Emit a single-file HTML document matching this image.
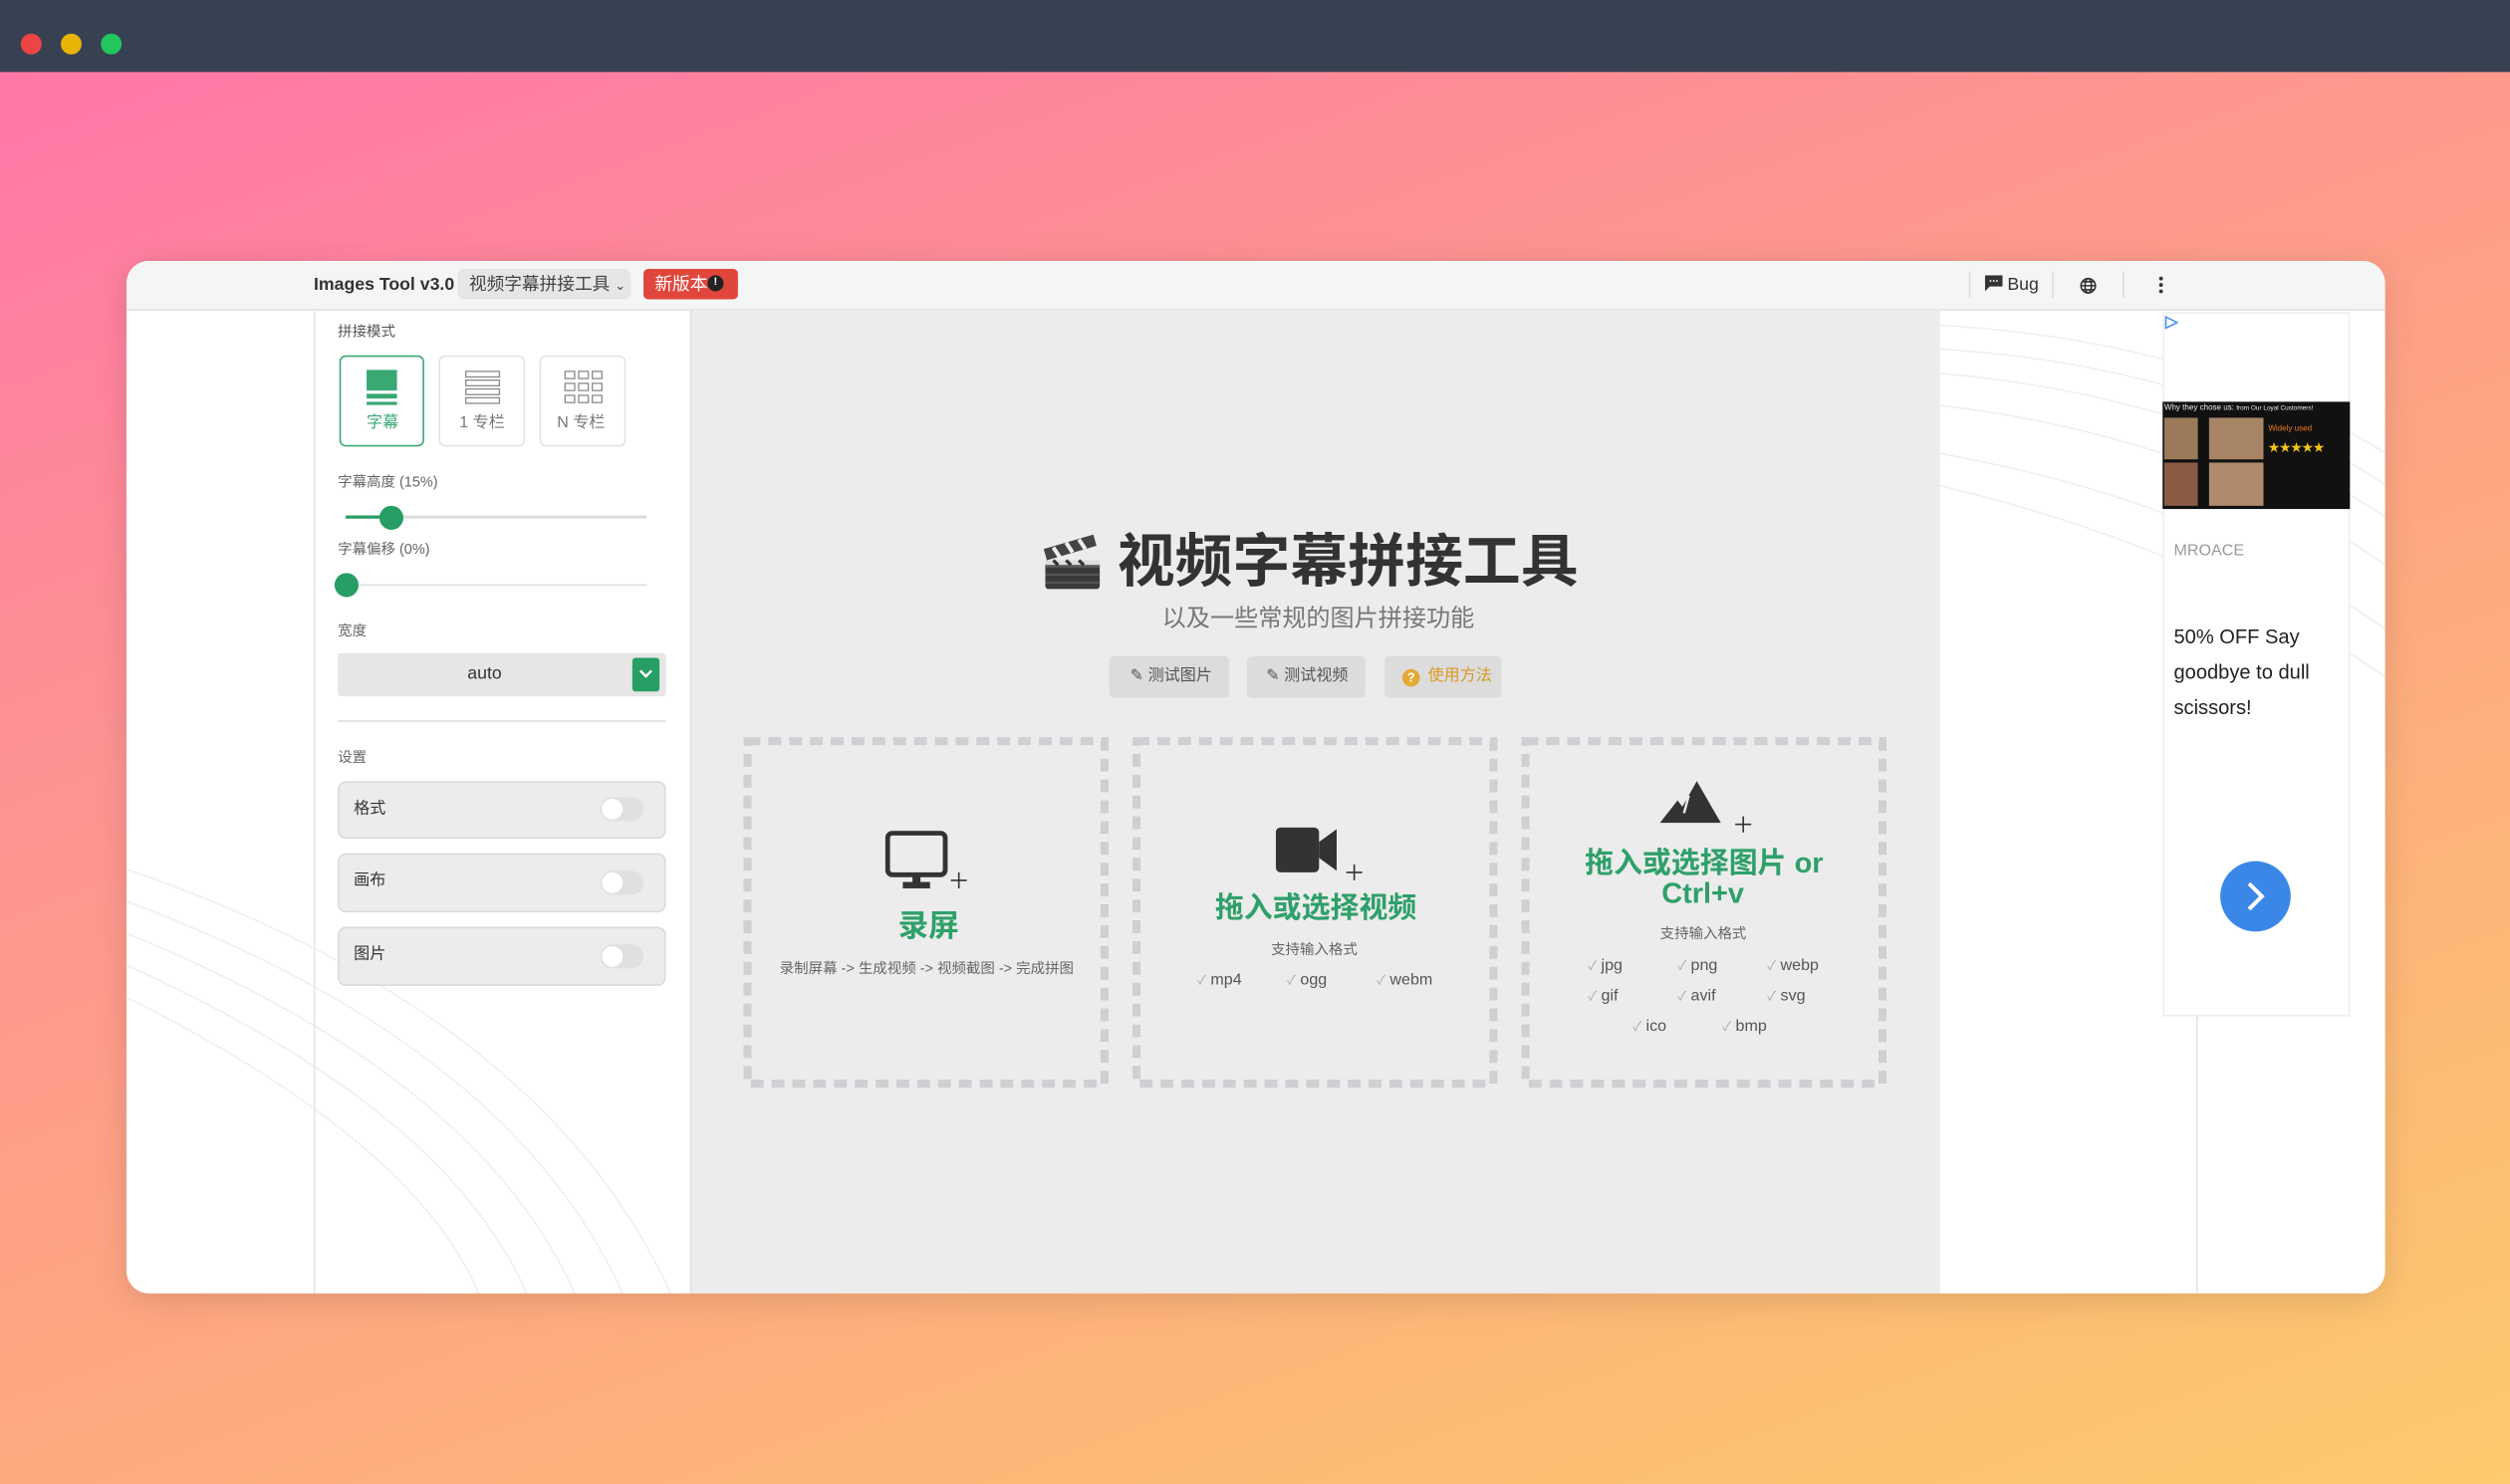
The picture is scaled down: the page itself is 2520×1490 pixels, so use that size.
<!DOCTYPE html>
<html><head><meta charset="utf-8"><style>
html,body{margin:0;padding:0;width:2520px;height:1490px;overflow:hidden}
body{background:linear-gradient(160deg,#ff74a9 0%,#fe9490 35%,#fdad7d 65%,#fdca6c 100%);font-family:"Liberation Sans","Noto Sans CJK SC",sans-serif}
#s{position:absolute;left:0;top:0;width:1568px;height:927px;transform:scale(1.60714);transform-origin:0 0}
.a{position:absolute}
.t{position:absolute;white-space:nowrap;line-height:1.2}
</style></head><body><div id="s">
<div class="a" style="left:0;top:0;width:1568px;height:45px;background:#374151"></div>
<div class="a" style="left:13px;top:21px;width:13px;height:13px;border-radius:50%;background:#ef4444"></div>
<div class="a" style="left:38px;top:21px;width:13px;height:13px;border-radius:50%;background:#eab308"></div>
<div class="a" style="left:63px;top:21px;width:13px;height:13px;border-radius:50%;background:#22c55e"></div>

<div class="a" style="left:79px;top:163px;width:1411px;height:645px;border-radius:14px;background:#fff;overflow:hidden;box-shadow:0 4px 20px rgba(0,0,0,.12)">
 <svg class="a" style="left:0;top:0" width="1411" height="645" fill="none" stroke="#efefef" stroke-width="1">
  <path d="M0 380 Q260 470 340 645"/><path d="M0 400 Q240 490 310 645"/><path d="M0 420 Q220 510 280 645"/><path d="M0 440 Q200 530 250 645"/><path d="M0 460 Q180 550 220 645"/>
  <path d="M1131 40 Q1300 50 1411 120"/><path d="M1131 55 Q1300 65 1411 140"/><path d="M1131 70 Q1300 85 1411 160"/><path d="M1131 90 Q1300 110 1411 190"/><path d="M1131 120 Q1300 150 1411 230"/><path d="M1131 140 Q1300 180 1411 260"/>
 </svg>
 <div class="a" style="left:0;top:0;width:1411px;height:30px;background:#f4f5f5;border-bottom:1px solid #e2e2e2"></div>
 <div class="a" style="left:117px;top:31px;width:1px;height:614px;background:#e6e6e6"></div>
 <div class="a" style="left:352px;top:31px;width:780px;height:614px;background:#ececec;border-left:1px solid #e0e0e0"></div>
 <div class="a" style="left:1293px;top:472px;width:1px;height:173px;background:#e6e6e6"></div>
</div>

<!-- header -->
<div class="t" style="left:196px;top:172px;font-size:11px;font-weight:bold;color:#333">Images Tool v3.0</div>
<div class="a" style="left:286px;top:168px;width:108px;height:19px;background:#e6e6e6;border-radius:4px"></div>
<div class="t" style="left:293px;top:172px;font-size:11px;color:#444">视频字幕拼接工具 <span style="font-size:8px">⌄</span></div>
<div class="a" style="left:402px;top:168px;width:59px;height:19px;background:#e0463b;border-radius:3px"></div>
<div class="t" style="left:409px;top:172px;font-size:11px;color:#fff">新版本</div>
<div class="a" style="left:442px;top:172px;width:10px;height:10px;border-radius:50%;background:#222;color:#fff;font-size:7px;text-align:center;line-height:10px;font-weight:bold">!</div>
<div class="a" style="left:1230px;top:170px;width:1px;height:16px;background:#ddd"></div>
<div class="a" style="left:1282px;top:170px;width:1px;height:16px;background:#ddd"></div>
<div class="a" style="left:1326px;top:170px;width:1px;height:16px;background:#ddd"></div>
<svg class="a" style="left:1240px;top:172px" width="11" height="10"><path d="M0 0h11v7H3L0 10z" fill="#333"/><path d="M3 3.5h5" stroke="#fff" stroke-width="1" stroke-dasharray="1 1"/></svg>
<div class="t" style="left:1254px;top:172px;font-size:11px;color:#333">Bug</div>
<svg class="a" style="left:1299px;top:173px" width="11" height="11" fill="none" stroke="#333" stroke-width="1"><circle cx="5.5" cy="5.5" r="4.5"/><ellipse cx="5.5" cy="5.5" rx="2" ry="4.5"/><path d="M1 5.5h9M2 3h7M2 8h7"/></svg>
<svg class="a" style="left:1348px;top:172px" width="4" height="12" fill="#333"><circle cx="2" cy="2" r="1.2"/><circle cx="2" cy="6" r="1.2"/><circle cx="2" cy="10" r="1.2"/></svg>

<!-- sidebar -->
<div class="t" style="left:211px;top:202px;font-size:9px;color:#555">拼接模式</div>
<div class="a" style="left:212px;top:222px;width:53px;height:57px;border:1px solid #3aa873;border-radius:4px;box-sizing:border-box"></div>
<div class="a" style="left:274px;top:222px;width:54px;height:57px;border:1px solid #e3e3e3;border-radius:4px;box-sizing:border-box"></div>
<div class="a" style="left:337px;top:222px;width:54px;height:57px;border:1px solid #e3e3e3;border-radius:4px;box-sizing:border-box"></div>
<svg class="a" style="left:229px;top:231px" width="20" height="22" fill="#3aa873"><rect x="0" y="0" width="19" height="13"/><rect x="0" y="15" width="19" height="3"/><rect x="0" y="20" width="19" height="2.5"/></svg>
<svg class="a" style="left:290px;top:231px" width="24" height="22" fill="none" stroke="#888" stroke-width=".8"><rect x="1" y="1" width="21" height="3.5"/><rect x="1" y="6.5" width="21" height="3.5"/><rect x="1" y="12" width="21" height="3.5"/><rect x="1" y="17.5" width="21" height="3.5"/></svg>
<svg class="a" style="left:352px;top:231px" width="26" height="22" fill="none" stroke="#888" stroke-width=".8"><rect x="1" y="1" width="6" height="4.5"/><rect x="9.5" y="1" width="6" height="4.5"/><rect x="18" y="1" width="6" height="4.5"/><rect x="1" y="8.5" width="6" height="4.5"/><rect x="9.5" y="8.5" width="6" height="4.5"/><rect x="18" y="8.5" width="6" height="4.5"/><rect x="1" y="16" width="6" height="4.5"/><rect x="9.5" y="16" width="6" height="4.5"/><rect x="18" y="16" width="6" height="4.5"/></svg>
<div class="t" style="left:229px;top:259px;font-size:10px;color:#3aa873">字幕</div>
<div class="t" style="left:287px;top:259px;font-size:10px;color:#777">1 专栏</div>
<div class="t" style="left:348px;top:259px;font-size:10px;color:#777">N 专栏</div>

<div class="t" style="left:211px;top:296px;font-size:9px;color:#666">字幕高度 (15%)</div>
<div class="a" style="left:216px;top:322px;width:188px;height:1.5px;background:#ddd"></div>
<div class="a" style="left:216px;top:322px;width:28px;height:2px;background:#279e64"></div>
<div class="a" style="left:236.5px;top:315.5px;width:15px;height:15px;border-radius:50%;background:#279e64"></div>
<div class="t" style="left:211px;top:338px;font-size:9px;color:#666">字幕偏移 (0%)</div>
<div class="a" style="left:216px;top:364.5px;width:188px;height:1.5px;background:#ddd"></div>
<div class="a" style="left:208.5px;top:357.5px;width:15px;height:15px;border-radius:50%;background:#279e64"></div>

<div class="t" style="left:211px;top:389px;font-size:9px;color:#666">宽度</div>
<div class="a" style="left:211px;top:408px;width:205px;height:27px;background:#e6e6e6;border-radius:2px"></div>
<div class="t" style="left:292px;top:415px;font-size:11px;color:#333">auto</div>
<div class="a" style="left:395px;top:411px;width:17px;height:21px;background:#279e64;border-radius:2px"></div>
<svg class="a" style="left:399px;top:418px" width="9" height="6" fill="none" stroke="#fff" stroke-width="1.5"><path d="M1 1l3.5 3.5L8 1"/></svg>
<div class="a" style="left:211px;top:450px;width:205px;height:1px;background:#ddd"></div>
<div class="t" style="left:211px;top:468px;font-size:9px;color:#666">设置</div>

<div class="a" style="left:211px;top:488px;width:205px;height:36px;background:#ececec;border:1px solid #dadada;border-radius:5px;box-sizing:border-box"></div>
<div class="a" style="left:211px;top:533px;width:205px;height:37px;background:#ececec;border:1px solid #dadada;border-radius:5px;box-sizing:border-box"></div>
<div class="a" style="left:211px;top:579px;width:205px;height:37px;background:#ececec;border:1px solid #dadada;border-radius:5px;box-sizing:border-box"></div>
<div class="t" style="left:221px;top:500px;font-size:10px;color:#333">格式</div>
<div class="t" style="left:221px;top:545px;font-size:10px;color:#333">画布</div>
<div class="t" style="left:221px;top:591px;font-size:10px;color:#333">图片</div>
<div class="a" style="left:375px;top:498px;width:27px;height:15px;border-radius:8px;background:#e0e0e0"></div><div class="a" style="left:376px;top:499px;width:13px;height:13px;border-radius:50%;background:#fff"></div>
<div class="a" style="left:375px;top:544px;width:27px;height:15px;border-radius:8px;background:#e0e0e0"></div><div class="a" style="left:376px;top:545px;width:13px;height:13px;border-radius:50%;background:#fff"></div>
<div class="a" style="left:375px;top:590px;width:27px;height:15px;border-radius:8px;background:#e0e0e0"></div><div class="a" style="left:376px;top:591px;width:13px;height:13px;border-radius:50%;background:#fff"></div>

<!-- main -->
<svg class="a" style="left:650px;top:333px" width="38" height="36"><path d="M2 10 L33 1 L35 8 L4 17z" fill="#444"/><path d="M8 9l4 6M16 6l4 6M24 4l4 6" stroke="#eee" stroke-width="2.5"/><rect x="3" y="17" width="34" height="18" rx="2" fill="#3a3a3a"/><path d="M3 21h34M3 26h34M3 31h34" stroke="#666" stroke-width=".8"/><rect x="3" y="17" width="34" height="3" fill="#ddd"/><path d="M8 17l3 3M16 17l3 3M24 17l3 3" stroke="#333" stroke-width="2"/></svg>
<div class="t" style="left:698px;top:329px;font-size:36px;font-weight:bold;color:#333">视频字幕拼接工具</div>
<div class="t" style="left:726px;top:378px;font-size:15px;color:#777">以及一些常规的图片拼接功能</div>
<div class="a" style="left:693px;top:410px;width:75px;height:26px;background:#dcdcdc;border-radius:3px"></div>
<div class="a" style="left:779px;top:410px;width:74px;height:26px;background:#dcdcdc;border-radius:3px"></div>
<div class="a" style="left:865px;top:410px;width:73px;height:26px;background:#dcdcdc;border-radius:3px"></div>
<div class="t" style="left:706px;top:417px;font-size:10px;color:#555">✎ 测试图片</div>
<div class="t" style="left:791px;top:417px;font-size:10px;color:#555">✎ 测试视频</div>
<div class="a" style="left:876px;top:418px;width:11px;height:11px;border-radius:50%;background:#e4a935;color:#fff;font-size:8px;text-align:center;line-height:11px;font-weight:bold">?</div>
<div class="t" style="left:892px;top:417px;font-size:10px;color:#d89a22">使用方法</div>

<svg class="a" style="left:460px;top:456px" width="725" height="230" fill="none" stroke="#cfcfd4" stroke-width="5" stroke-dasharray="8 5">
 <rect x="7" y="7" width="223" height="214"/><rect x="250" y="7" width="223" height="214"/><rect x="493" y="7" width="223" height="214"/>
</svg>
<!-- box1 -->
<svg class="a" style="left:553px;top:519px" width="52" height="38"><rect x="1.5" y="1.5" width="36" height="26" rx="3" fill="none" stroke="#333" stroke-width="3"/><rect x="17" y="28" width="5" height="5" fill="#333"/><rect x="11" y="32" width="17" height="4" fill="#333"/><path d="M46 26v10M41 31h10" stroke="#333" stroke-width="1"/></svg>
<div class="t" style="left:561px;top:569px;font-size:19px;font-weight:bold;color:#2fa06a">录屏</div>
<div class="t" style="left:487px;top:600px;font-size:9px;color:#666">录制屏幕 -&gt; 生成视频 -&gt; 视频截图 -&gt; 完成拼图</div>
<!-- box2 -->
<svg class="a" style="left:797px;top:516px" width="55" height="36"><rect x="0" y="1" width="27" height="28" rx="3" fill="#333"/><path d="M27 10 L38 2 V28 L27 20z" fill="#333"/><path d="M49 24v10M44 29h10" stroke="#333" stroke-width="1"/></svg>
<div class="t" style="left:759px;top:557px;font-size:18px;font-weight:bold;color:#2fa06a">拖入或选择视频</div>
<div class="t" style="left:794px;top:588px;font-size:9px;color:#666">支持输入格式</div>
<div class="t" style="left:748px;top:607px;font-size:10px;color:#555"><span style="color:#aaa;font-size:8px">✓</span> mp4</div>
<div class="t" style="left:804px;top:607px;font-size:10px;color:#555"><span style="color:#aaa;font-size:8px">✓</span> ogg</div>
<div class="t" style="left:860px;top:607px;font-size:10px;color:#555"><span style="color:#aaa;font-size:8px">✓</span> webm</div>
<!-- box3 -->
<svg class="a" style="left:1036px;top:488px" width="60" height="36"><path d="M1 26 L12 12 L15 16 L24 0 L39 26z" fill="#333"/><path d="M19 9 L16 20" stroke="#ececec" stroke-width="1.5"/><path d="M53 22v10M48 27h10" stroke="#333" stroke-width="1"/></svg>
<div class="t" style="left:990px;top:529px;font-size:18px;font-weight:bold;color:#2fa06a">拖入或选择图片 or</div>
<div class="t" style="left:1038px;top:548px;font-size:18px;font-weight:bold;color:#2fa06a">Ctrl+v</div>
<div class="t" style="left:1037px;top:578px;font-size:9px;color:#666">支持输入格式</div>
<div class="t" style="left:992px;top:598px;font-size:10px;color:#555"><span style="color:#aaa;font-size:8px">✓</span> jpg</div>
<div class="t" style="left:1048px;top:598px;font-size:10px;color:#555"><span style="color:#aaa;font-size:8px">✓</span> png</div>
<div class="t" style="left:1104px;top:598px;font-size:10px;color:#555"><span style="color:#aaa;font-size:8px">✓</span> webp</div>
<div class="t" style="left:992px;top:617px;font-size:10px;color:#555"><span style="color:#aaa;font-size:8px">✓</span> gif</div>
<div class="t" style="left:1048px;top:617px;font-size:10px;color:#555"><span style="color:#aaa;font-size:8px">✓</span> avif</div>
<div class="t" style="left:1104px;top:617px;font-size:10px;color:#555"><span style="color:#aaa;font-size:8px">✓</span> svg</div>
<div class="t" style="left:1020px;top:636px;font-size:10px;color:#555"><span style="color:#aaa;font-size:8px">✓</span> ico</div>
<div class="t" style="left:1076px;top:636px;font-size:10px;color:#555"><span style="color:#aaa;font-size:8px">✓</span> bmp</div>

<!-- ad -->
<div class="a" style="left:1351px;top:195px;width:117px;height:440px;border:1px solid #eee;box-sizing:border-box;background:#fff"></div>
<svg class="a" style="left:1352px;top:197px" width="10" height="9" fill="none" stroke="#4a8ef0" stroke-width="1"><path d="M1 1 L8 4.5 L1 8z"/></svg>
<div class="a" style="left:1351px;top:251px;width:117px;height:67px;background:#111"></div>
<div class="t" style="left:1352px;top:252px;font-size:5px;color:#eee">Why they chose us: <span style="font-size:4px">from Our Loyal Customers!</span></div>
<div class="a" style="left:1352px;top:261px;width:21px;height:26px;background:#9a7a5a"></div>
<div class="a" style="left:1380px;top:261px;width:34px;height:26px;background:#a88466"></div>
<div class="a" style="left:1352px;top:289px;width:21px;height:27px;background:#8a5a45"></div>
<div class="a" style="left:1380px;top:289px;width:34px;height:27px;background:#b08a6c"></div>
<div class="t" style="left:1417px;top:265px;font-size:5px;color:#f07a20">Widely used</div>
<div class="t" style="left:1417px;top:277px;font-size:7px;color:#f5c518">★★★★★</div>
<div class="t" style="left:1358px;top:339px;font-size:10px;color:#999">MROACE</div>
<div class="t" style="left:1358px;top:387px;font-size:12.5px;color:#222;line-height:22px;white-space:normal;width:100px">50% OFF Say goodbye to dull scissors!</div>
<div class="a" style="left:1387px;top:538px;width:44px;height:44px;border-radius:50%;background:#3b87e8"></div>
<svg class="a" style="left:1402px;top:550px" width="14" height="20" fill="none" stroke="#fff" stroke-width="2.5"><path d="M3 2l8 8-8 8"/></svg>
</div></body></html>
